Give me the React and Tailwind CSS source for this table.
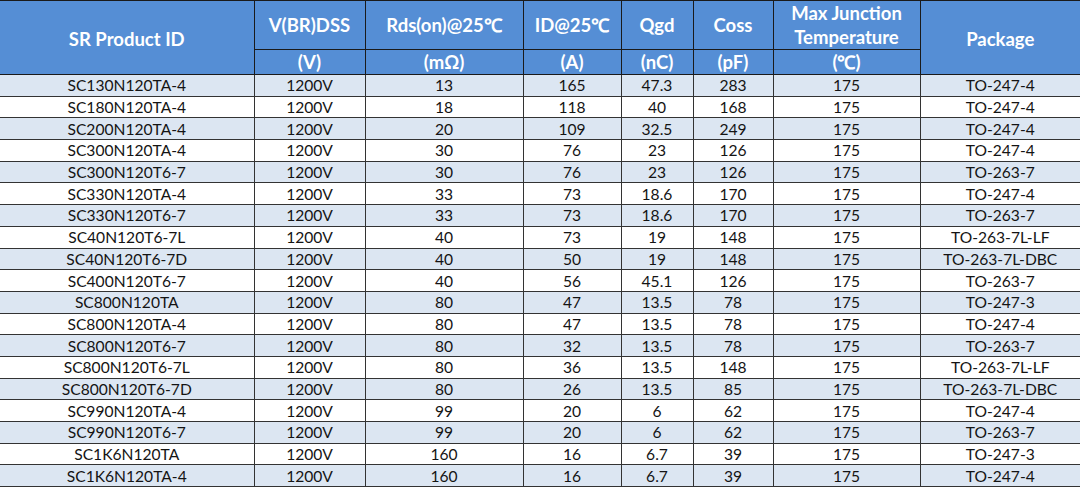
import React from 'react';

const rows = [
    ['SC130N120TA-4', '1200V', '13', '165', '47.3', '283', '175', 'TO-247-4'],
    ['SC180N120TA-4', '1200V', '18', '118', '40', '168', '175', 'TO-247-4'],
    ['SC200N120TA-4', '1200V', '20', '109', '32.5', '249', '175', 'TO-247-4'],
    ['SC300N120TA-4', '1200V', '30', '76', '23', '126', '175', 'TO-247-4'],
    ['SC300N120T6-7', '1200V', '30', '76', '23', '126', '175', 'TO-263-7'],
    ['SC330N120TA-4', '1200V', '33', '73', '18.6', '170', '175', 'TO-247-4'],
    ['SC330N120T6-7', '1200V', '33', '73', '18.6', '170', '175', 'TO-263-7'],
    ['SC40N120T6-7L', '1200V', '40', '73', '19', '148', '175', 'TO-263-7L-LF'],
    ['SC40N120T6-7D', '1200V', '40', '50', '19', '148', '175', 'TO-263-7L-DBC'],
    ['SC400N120T6-7', '1200V', '40', '56', '45.1', '126', '175', 'TO-263-7'],
    ['SC800N120TA', '1200V', '80', '47', '13.5', '78', '175', 'TO-247-3'],
    ['SC800N120TA-4', '1200V', '80', '47', '13.5', '78', '175', 'TO-247-4'],
    ['SC800N120T6-7', '1200V', '80', '32', '13.5', '78', '175', 'TO-263-7'],
    ['SC800N120T6-7L', '1200V', '80', '36', '13.5', '148', '175', 'TO-263-7L-LF'],
    ['SC800N120T6-7D', '1200V', '80', '26', '13.5', '85', '175', 'TO-263-7L-DBC'],
    ['SC990N120TA-4', '1200V', '99', '20', '6', '62', '175', 'TO-247-4'],
    ['SC990N120T6-7', '1200V', '99', '20', '6', '62', '175', 'TO-263-7'],
    ['SC1K6N120TA', '1200V', '160', '16', '6.7', '39', '175', 'TO-247-3'],
    ['SC1K6N120TA-4', '1200V', '160', '16', '6.7', '39', '175', 'TO-247-4'],
];

const widths = ['w-[254px]', 'w-[111px]', 'w-[158px]', 'w-[98px]', 'w-[72px]', 'w-[80px]', 'w-[147px]', 'w-[160px]'];

const App = () => {
    const th = 'border border-[#1a1a1a] font-bold text-white text-center leading-[24px] p-0 whitespace-nowrap';

    return (
        <div className="w-[1080px] h-[488px] overflow-hidden bg-white" style={{ fontFamily: 'Lato, "Open Sans", sans-serif' }}>
            <table className="table-fixed border-collapse w-[1080px]">
                <colgroup>
                    {widths.map((w, i) => <col key={i} className={w} />)}
                </colgroup>
                <thead className="bg-[#558ed5] text-[18.5px]">
                    <tr className="h-[49px]">
                        <th rowSpan={2} className={`${th} border-l-0 pt-[3px]`}>SR Product ID</th>
                        <th className={th}>V(BR)DSS</th>
                        <th className={th}>Rds(on)@25℃</th>
                        <th className={th}>ID@25℃</th>
                        <th className={th}>Qgd</th>
                        <th className={th}>Coss</th>
                        <th className={`${th} leading-[23px]`}>Max Junction<br />Temperature</th>
                        <th rowSpan={2} className={`${th} border-r-0 pt-[3px]`}>Package</th>
                    </tr>
                    <tr className="h-[25px]">
                        <th className={th}>(V)</th>
                        <th className={th}>(mΩ)</th>
                        <th className={th}>(A)</th>
                        <th className={th}>(nC)</th>
                        <th className={th}>(pF)</th>
                        <th className={th}>(℃)</th>
                    </tr>
                </thead>
                <tbody className="text-[15.6px] text-[#141414]">
                    {rows.map((r, i) => (
                        <tr key={i} className={`h-[21.7px] ${i % 2 === 0 ? 'bg-[#dce6f2]' : 'bg-white'}`}>
                            {r.map((c, j) => (
                                <td
                                    key={j}
                                    className={`border border-[#333] text-center p-0 leading-[20px] whitespace-nowrap ${j === 0 ? 'border-l-0' : ''} ${j === 7 ? 'border-r-0' : ''}`}
                                >
                                    {c}
                                </td>
                            ))}
                        </tr>
                    ))}
                </tbody>
            </table>
        </div>
    );
};

export default App;
